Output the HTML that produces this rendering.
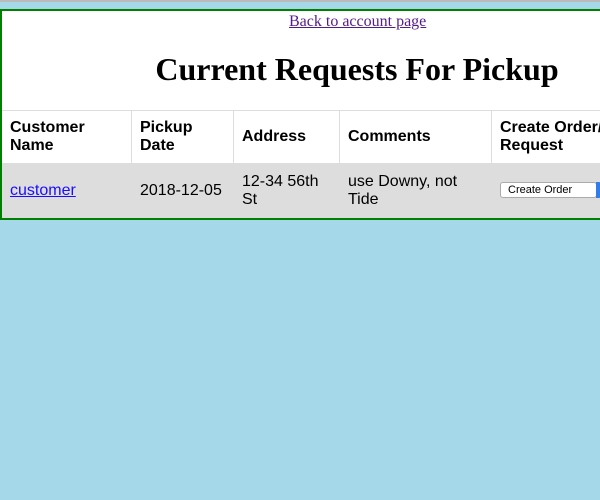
<!DOCTYPE html>
<html><head><style>
body{margin:0;width:600px;height:500px;overflow:hidden;background:#a5d8e8;position:relative;font-family:"Liberation Sans",sans-serif;}
.top{position:absolute;left:0;top:0;width:600px;height:2px;background:#bbb}
.box{position:absolute;left:0;top:9px;width:720px;height:206px;border:2px solid #008000;border-bottom-width:3px;background:#fff;}
a.back{position:absolute;left:287px;top:2px;font:16px "Liberation Serif",serif;color:#551a8b;}
h1{position:absolute;left:-2px;width:714px;top:40px;margin:0;text-align:center;font:bold 32px "Liberation Serif",serif;}
table{position:absolute;left:0;top:99px;border-collapse:collapse;font-size:16px;}
td,th{border:1px solid #ddd;text-align:left;padding:0 8px;vertical-align:middle;line-height:18px}
th{height:52px}
td{height:53px;background:#ddd;border-color:#ddd}
tr.h th{border-bottom:0}
tr th:first-child,tr td:first-child{border-left:0;padding-left:8px}
a.c{color:#1a0dff}
.btn{display:inline-block;height:16px;border:1px solid #aaa;border-radius:3px;background:#fff;font-size:11px;line-height:15px;padding-left:7px;position:relative;top:-2px;box-sizing:border-box;width:97px}
.btn:after{content:"";position:absolute;right:-6px;top:-1px;width:6px;height:16px;background:#2f7de8;border-radius:0 3px 3px 0}
</style></head><body>
<div class="top"></div>
<div class="box">
<a class="back" href="#">Back to account page</a>
<h1>Current Requests For Pickup</h1>
<table>
<tr class="h"><th style="width:113px">Customer<br>Name</th><th style="width:85px">Pickup<br>Date</th><th style="width:89px">Address</th><th style="width:135px">Comments</th><th style="width:150px">Create Order/<br>Request</th></tr>
<tr><td><a class="c" href="#">customer</a></td><td>2018-12-05</td><td>12-34 56th<br>St</td><td>use Downy, not<br>Tide</td><td><span class="btn">Create Order</span></td></tr>
</table>
</div>
</body></html>
